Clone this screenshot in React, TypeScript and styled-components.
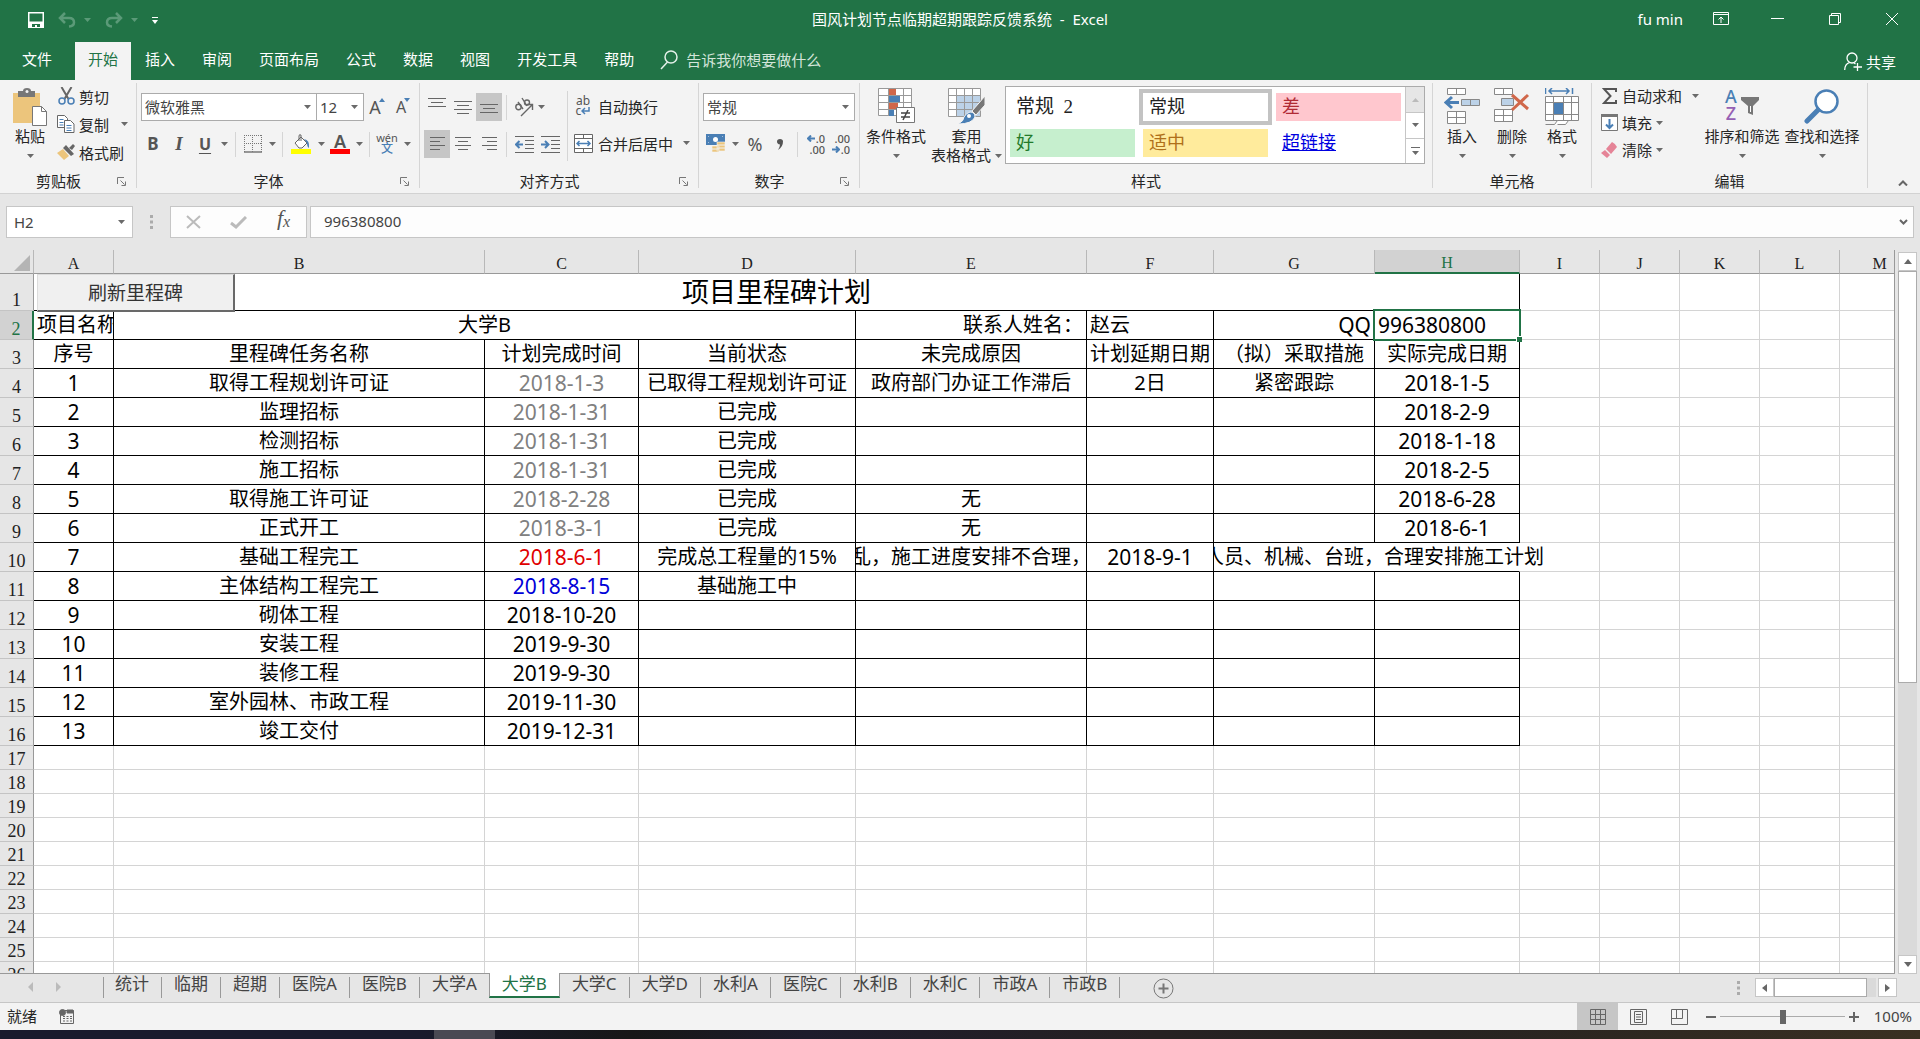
import React from "react";
import styled, { createGlobalStyle, css } from "styled-components";

const UI = `"Noto Sans", "Noto Sans CJK SC", sans-serif`;
const SONG = `"Liberation Serif", "Noto Sans CJK SC", serif`;
const GREEN = "#217346";
const INK = "#262626";
const GREY = "#6a6a6a";
const BLUE = "#4a7fb5";

const Global = createGlobalStyle`
  *, *::before, *::after { box-sizing: border-box; }
  body { margin: 0; font-family: ${UI}; font-size: 15px; color: ${INK}; }
  button, input, select { font: inherit; color: inherit; margin: 0; padding: 0; border: 0; background: none; border-radius: 0; }
  svg { display: block; flex: none; }
`;

const Window = styled.div`
  display: flex;
  flex-direction: column;
  height: 100vh;
  overflow: hidden;
  background: #e6e6e6;
`;

/* ---------- title bar ---------- */

const TitleBar = styled.header`
  display: grid;
  grid-template-columns: 1fr auto 1fr;
  align-items: center;
  height: 42px;
  padding-bottom: 5px;
  background: ${GREEN};
  color: #fff;
`;
const QuickAccess = styled.div`
  display: flex;
  align-items: center;
  gap: 8px;
  padding: 3px 0 0 28px;
`;
const QuickItem = styled.div`
  display: flex;
  align-items: center;
  gap: 8px;
  margin-left: 6px;
`;
const Title = styled.h1`
  margin: 0;
  font-size: 15px;
  font-weight: 400;
  line-height: 20px;
  white-space: pre;
`;
const WindowControls = styled.div`
  display: flex;
  align-items: center;
  justify-content: flex-end;
`;
const UserName = styled.span`
  margin-right: 9px;
`;
const CaptionButton = styled.button<{ $w?: number }>`
  display: flex;
  align-items: center;
  justify-content: center;
  width: ${(p) => p.$w ?? 57}px;
  height: 32px;
`;
const PlainButton = styled.button`
  display: flex;
  align-items: center;
`;

/* ---------- ribbon tabs ---------- */

const TabBar = styled.nav`
  display: flex;
  align-items: stretch;
  height: 38px;
  padding-right: 24px;
  background: ${GREEN};
  color: #fff;
`;
const RibbonTab = styled.button<{ $active?: boolean; $file?: boolean }>`
  padding: 0 13px 6px 13px;
  margin-right: 1px;
  margin-left: ${(p) => (p.$file ? 9 : 0)}px;
  white-space: nowrap;
  ${(p) => p.$file && css`margin-right: 10px;`}
  ${(p) => p.$active && css`background: #f3f3f3; color: ${GREEN};`}
`;
const TellMe = styled.label`
  display: flex;
  align-items: center;
  gap: 8px;
  margin-left: 12px;
  padding-bottom: 2px;
  flex: 1;
  input { flex: 1; outline: none; }
  input::placeholder { color: #d3e5da; opacity: 1; }
`;
const Share = styled.button`
  display: flex;
  align-items: center;
  gap: 4px;
`;

/* ---------- ribbon ---------- */

const Ribbon = styled.section`
  display: flex;
  height: 114px;
  padding: 3px 0 5px;
  background: #f3f3f3;
  border-bottom: 1px solid #d2d2d2;
`;
const Group = styled.div<{ $w: number }>`
  flex: none;
  display: flex;
  flex-direction: column;
  width: ${(p) => p.$w}px;
  border-right: 1px solid #d5d5d5;
`;
const GroupBody = styled.div<{ $pad: number }>`
  flex: 1;
  display: flex;
  padding-left: ${(p) => p.$pad}px;
`;
const GroupFoot = styled.div<{ $launch?: boolean }>`
  display: grid;
  grid-template-columns: ${(p) => (p.$launch ? "1fr 19px" : "1fr")};
  align-items: center;
  height: 17px;
  line-height: 17px;
  text-align: center;
  margin-bottom: -2px;
`;
const RibbonEnd = styled.div`
  flex: 1;
  display: flex;
  justify-content: flex-end;
  align-items: flex-end;
  padding: 0 12px 2px;
`;
const BigButton = styled.button<{ $w: number }>`
  display: flex;
  flex-direction: column;
  align-items: center;
  width: ${(p) => p.$w}px;
  padding-top: 5px;
  line-height: 19px;
  white-space: nowrap;
`;
const BigIcon = styled.span`
  display: flex;
  align-items: flex-start;
  justify-content: center;
  height: 39px;
`;
const BigLine = styled.span`
  display: flex;
  align-items: center;
  justify-content: center;
  gap: 4px;
  height: 19px;
`;
const Stack = styled.div<{ $row: number; $ml?: number; $w?: number }>`
  display: grid;
  grid-auto-rows: ${(p) => p.$row}px;
  align-content: start;
  margin-left: ${(p) => p.$ml ?? 0}px;
  width: ${(p) => (p.$w ? p.$w + "px" : "auto")};
`;
const LineButton = styled.button`
  display: flex;
  align-items: center;
  gap: 4px;
  padding-bottom: 2px;
  white-space: nowrap;
`;
const IconSlot = styled.span<{ $w: number }>`
  display: flex;
  justify-content: center;
  width: ${(p) => p.$w}px;
`;
const Rows = styled.div`
  display: flex;
  flex-direction: column;
  gap: 9px;
  padding-top: 10px;
`;
const ToolRow = styled.div`
  display: flex;
  align-items: center;
  height: 28px;
`;
const Tool = styled.button<{ $w: number; $on?: boolean }>`
  display: flex;
  align-items: center;
  justify-content: center;
  width: ${(p) => p.$w}px;
  height: 28px;
  color: #555;
  background: ${(p) => (p.$on ? "#c6c6c6" : "none")};
`;
const Glyph = styled.span<{ $size?: number; $bold?: boolean; $italic?: boolean; $under?: boolean }>`
  font-size: ${(p) => p.$size ?? 18}px;
  line-height: 20px;
  font-weight: ${(p) => (p.$bold ? 700 : 400)};
  font-style: ${(p) => (p.$italic ? "italic" : "normal")};
  font-family: ${(p) => (p.$italic ? `"Liberation Serif", serif` : "inherit")};
  text-decoration: ${(p) => (p.$under ? "underline" : "none")};
  text-underline-offset: 3px;
`;
const Rule = styled.span<{ $w?: number; $h?: number }>`
  flex: none;
  width: 1px;
  height: ${(p) => p.$h ?? 25}px;
  margin: 0 ${(p) => p.$w ?? 4}px;
  background: #d5d5d5;
`;
const TallRule = styled(Rule)`
  margin-top: 8px;
`;
const Combo = styled.span<{ $w: number }>`
  position: relative;
  display: flex;
  align-items: center;
  width: ${(p) => p.$w}px;
  height: 28px;
  border: 1px solid #ababab;
  background: #fff;
  color: #444;
  & + & { border-left: 0; }
  select {
    appearance: none;
    width: 100%;
    height: 100%;
    padding: 0 0 1px 3px;
    outline: none;
  }
  svg { position: absolute; right: 5px; pointer-events: none; }
`;

const Gallery = styled.div`
  display: flex;
  width: 420px;
  height: 78px;
  margin: 3px 0 0 2px;
  border: 1px solid #ababab;
  background: #fff;
`;
const Swatches = styled.div`
  flex: 1;
  display: grid;
  grid-template-columns: repeat(3, 125px);
  grid-auto-rows: 28px;
  gap: 8px;
  padding: 6px 4px;
`;
const Swatch = styled.button<{ $bg?: string; $fg?: string; $on?: boolean; $link?: boolean; $size?: number }>`
  padding-left: 6px;
  text-align: left;
  font-family: ${SONG};
  font-size: ${(p) => p.$size ?? 18}px;
  line-height: 26px;
  white-space: pre;
  background: ${(p) => p.$bg ?? "#fff"};
  color: ${(p) => p.$fg ?? "#222"};
  text-decoration: ${(p) => (p.$link ? "underline" : "none")};
  box-shadow: ${(p) => (p.$on ? "0 0 0 4px #c3c3c3" : "none")};
`;
const GalleryNav = styled.div`
  display: grid;
  grid-template-rows: 1fr 1fr 1fr;
  width: 19px;
  border-left: 1px solid #c6c6c6;
  button { display: flex; align-items: center; justify-content: center; }
  button + button { border-top: 1px solid #c6c6c6; }
  button:first-child { background: #e6e6e6; }
`;

/* ---------- formula bar ---------- */

const FormulaBar = styled.section`
  display: flex;
  align-items: center;
  height: 56px;
  padding: 0 6px 0 6px;
  color: #444;
`;
const NameBox = styled(Combo)`
  height: 32px;
  border-color: #c6c6c6;
  select { padding: 0 0 1px 7px; }
  svg { right: 7px; }
`;
const FxTools = styled.div`
  display: flex;
  width: 137px;
  height: 32px;
  border: 1px solid #c6c6c6;
  background: #fdfdfd;
  button { flex: 1; display: flex; align-items: center; justify-content: center; }
`;
const FormulaField = styled.label`
  flex: 1;
  display: flex;
  align-items: center;
  height: 32px;
  margin-left: 3px;
  padding: 0 5px 0 13px;
  border: 1px solid #c6c6c6;
  background: #fdfdfd;
  input { flex: 1; outline: none; padding-bottom: 2px; }
`;
const GripBox = styled.span<{ $w: number }>`
  display: flex;
  justify-content: center;
  align-self: center;
  width: ${(p) => p.$w}px;
`;

/* ---------- sheet ---------- */

const SheetArea = styled.main`
  flex: 1;
  min-height: 0;
  display: flex;
`;
const SheetPane = styled.div`
  position: relative;
  flex: 1;
  min-width: 0;
  overflow: hidden;
  background: #fff;
  border-right: 1px solid #999;
  border-bottom: 1px solid #999;
`;
const Sheet = styled.table`
  width: 100%;
  table-layout: fixed;
  border-collapse: separate;
  border-spacing: 0;
  font-size: 20px;
  line-height: 24px;
  color: #000;
`;
const ColHead = styled.th<{ $on?: boolean }>`
  height: 24px;
  padding: 3px 0 0;
  font-family: ${SONG};
  font-size: 16px;
  line-height: 17px;
  font-weight: 400;
  background: ${(p) => (p.$on ? "#d2d2d2" : "#e6e6e6")};
  color: ${(p) => (p.$on ? GREEN : "#222")};
  border-right: 1px solid #b8b8b8;
  border-bottom: ${(p) => (p.$on ? `2px solid ${GREEN}` : "1px solid #999")};
`;
const Corner = styled(ColHead)`
  padding: 0;
  svg { margin: 2px 3px 0 auto; }
`;
const RowHead = styled.th<{ $h: number; $on?: boolean }>`
  height: ${(p) => p.$h}px;
  padding: 0;
  vertical-align: bottom;
  font-family: ${SONG};
  font-size: 18px;
  line-height: 20px;
  font-weight: 400;
  background: ${(p) => (p.$on ? "#d2d2d2" : "#e6e6e6")};
  color: ${(p) => (p.$on ? GREEN : "#222")};
  border-bottom: 1px solid #c4c4c4;
  border-right: ${(p) => (p.$on ? `2px solid ${GREEN}` : "1px solid #999")};
`;
const Cell = styled.td<{ $table?: boolean; $align?: string; $fg?: string; $num?: boolean; $big?: boolean; $spill?: boolean }>`
  padding: 0 3px;
  overflow: ${(p) => (p.$spill ? "visible" : "hidden")};
  white-space: nowrap;
  text-align: ${(p) => p.$align ?? "center"};
  color: ${(p) => p.$fg ?? "#000"};
  font-size: ${(p) => (p.$big ? 27 : p.$num ? 21 : 20)}px;
  border-right: 1px solid ${(p) => (p.$spill ? "transparent" : p.$table ? "#000" : "#d4d4d4")};
  border-bottom: 1px solid ${(p) => (p.$table ? "#000" : "#d4d4d4")};
`;
const ActiveCell = styled(Cell)`
  position: relative;
  overflow: visible;
  &::after {
    content: "";
    position: absolute;
    inset: -2px;
    border: 2px solid ${GREEN};
  }
  &::before {
    content: "";
    position: absolute;
    right: -3px;
    bottom: -3px;
    z-index: 1;
    width: 6px;
    height: 6px;
    background: ${GREEN};
    border: solid #fff;
    border-width: 1px 0 0 1px;
  }
`;
const Overflowing = styled.div<{ $end?: boolean }>`
  display: flex;
  justify-content: ${(p) => (p.$end ? "flex-end" : "center")};
  overflow: hidden;
  margin: 0 ${(p) => (p.$end ? -28 : -3)}px 0 -3px;
`;
const MacroButton = styled.button`
  position: absolute;
  left: 37px;
  top: 24px;
  width: 198px;
  height: 38px;
  padding-bottom: 2px;
  font-family: ${SONG};
  font-size: 19px;
  color: #333;
  background: #f0f0f0;
  border: 1px solid #dcdcdc;
  border-right: 2px solid #696969;
  border-bottom: 2px solid #696969;
`;
const VScroll = styled.div`
  display: flex;
  flex-direction: column;
  width: 19px;
  margin: 2px 3px 0 3px;
  background: #dadada;
`;
const ScrollButton = styled.button`
  flex: none;
  display: flex;
  align-items: center;
  justify-content: center;
  width: 19px;
  height: 19px;
  background: #fff;
  border: 1px solid #c6c6c6;
`;
const VThumb = styled.div`
  flex: 0 1 57%;
  background: #fff;
  border: 1px solid #ababab;
`;
const Gap = styled.div`
  flex: 1;
`;

/* ---------- sheet tabs ---------- */

const SheetTabs = styled.nav`
  display: flex;
  align-items: flex-start;
  height: 29px;
  border-bottom: 1px solid #c6c6c6;
`;
const TabArrows = styled.div`
  display: flex;
  gap: 23px;
  width: 103px;
  padding: 8px 0 0 28px;
`;
const SheetTab = styled.button<{ $active?: boolean; $first?: boolean }>`
  position: relative;
  height: 25px;
  margin-top: -1px;
  padding: 0 13px 4px 12px;
  font-size: 17px;
  line-height: 20px;
  white-space: nowrap;
  color: ${(p) => (p.$active ? GREEN : "#444")};
  ${(p) =>
    p.$active
      ? css`
          margin-left: -1px;
          z-index: 1;
          background: #fff;
          border: 1px solid #999;
          border-top: 0;
          border-bottom: 2px solid ${GREEN};
          padding: 0 12px 2px;
        `
      : css`
          &::after {
            content: "";
            position: absolute;
            right: 0;
            top: 4px;
            bottom: 0;
            width: 1px;
            background: #999;
          }
        `}
  ${(p) => p.$first && css`&::before { content: ""; position: absolute; left: 0; top: 4px; bottom: 0; width: 1px; background: #999; }`}
`;
const AddSheet = styled.button`
  margin: 4px 0 0 33px;
`;
const HScroll = styled.div`
  display: flex;
  width: 142px;
  margin: 4px 23px 0 8px;
`;
const HTrack = styled.div`
  flex: 1;
  margin-right: 2px;
  padding-right: 9px;
  background: #dadada;
`;
const HThumb = styled.div`
  height: 19px;
  background: #fff;
  border: 1px solid #ababab;
`;

/* ---------- status bar ---------- */

const StatusBar = styled.footer`
  display: flex;
  align-items: center;
  height: 27px;
  padding: 0 8px 0 7px;
  background: #f3f3f3;
`;
const Ready = styled.span`
  margin-right: 22px;
  padding-bottom: 2px;
`;
const ViewButton = styled.button<{ $on?: boolean }>`
  display: flex;
  align-items: center;
  justify-content: center;
  width: 41px;
  height: 27px;
  background: ${(p) => (p.$on ? "#c6c6c6" : "none")};
`;
const ZoomOut = styled(PlainButton)`
  margin-left: 6px;
`;
const ZoomRange = styled.input`
  appearance: none;
  width: 125px;
  height: 14px;
  margin: 0 4px;
  background: linear-gradient(#ababab, #ababab) center / 100% 1px no-repeat;
  &::-webkit-slider-thumb {
    appearance: none;
    width: 6px;
    height: 14px;
    background: #666;
  }
`;
const ZoomValue = styled.span`
  margin-left: 12px;
  padding-bottom: 2px;
  width: 41px;
  text-align: right;
  color: #444;
`;
const TaskBar = styled.div`
  display: flex;
  height: 9px;
  overflow: hidden;
  background: linear-gradient(90deg, #191a2c 0%, #191a2c 22%, #171717 33%, #1d1b2b 42%, #262122 60%, #262220 75%, #3a3022 100%);
  padding-left: 434px;
`;
const TaskItem = styled.span`
  width: 61px;
  background: #4a4953;
`;

/* ---------- icons ---------- */

const Arrow = ({ c = GREY }: { c?: string }) => (
  <svg width="7" height="4" viewBox="0 0 7 4"><path d="M0 0h7L3.500 4z" fill={c} /></svg>
);
const Lines = ({ a, y = 0 }: { a: number[][]; y?: number }) => (
  <svg width="18" height="18" viewBox="0 0 18 18" stroke="#666" fill="none">
    {a.map(([x1, x2], i) => <path key={i} d={`M${x1} ${y + i * 4 + 0.5}H${x2}`} />)}
  </svg>
);
const Launcher = () => (
  <svg width="9" height="9" viewBox="0 0 9 9" fill="none" stroke="#777"><path d="M.5 7V.5H7M3.500 3.500l4 4M8.500 4.500v4h-4" /></svg>
);
const Grip = () => (
  <svg width="3" height="14" viewBox="0 0 3 14" fill="#ababab"><path d="M0 0h3v3H0zM0 5.500h3v3H0zM0 11h3v3H0z" /></svg>
);
const SaveIcon = () => (
  <svg width="16" height="16" viewBox="0 0 16 16"><path fill="#fff" fillRule="evenodd" d="M0 0h16v16H0zM1.500 1.500v8h13v-8zM4 12v3h3v-2h2v2h3v-3z" /></svg>
);
const UndoIcon = ({ flip }: { flip?: boolean }) => (
  <svg width="18" height="16" viewBox="0 0 18 16" fill="none" stroke="#5b9a78" strokeWidth="2.500">
    <g transform={flip ? "matrix(-1 0 0 1 18 0)" : undefined}><path d="M2 6h9q5 0 5 4.500Q16 14 11 14.500M7 1L2 6l5 5" /></g>
  </svg>
);
const PasteIcon = () => (
  <svg width="36" height="38" viewBox="0 0 36 38">
    <path fill="#ecc57c" d="M1 5h27v30H1z" /><path fill="#777" d="M6 3h5q0-3 4-3t4 3h4v6H6z" /><circle cx="15" cy="3.500" r="1.500" fill="#f3f3f3" />
    <path fill="#fff" stroke="#777" d="M20.500 18.500h9l5 5v14h-14z" /><path d="M29.500 18.500v5h5" fill="none" stroke="#777" />
  </svg>
);
const CutIcon = () => (
  <svg width="17" height="18" viewBox="0 0 17 18" fill="none"><path d="M3.500 0l7 12M13.500 0l-7 12" stroke="#666" strokeWidth="2" /><circle cx="4" cy="14" r="3" stroke={BLUE} strokeWidth="1.500" /><circle cx="13" cy="14" r="3" stroke={BLUE} strokeWidth="1.500" /></svg>
);
const CopyIcon = () => (
  <svg width="18" height="18" viewBox="0 0 18 18" fill="#fff" stroke="#666"><path d="M.5.500h7l3 3v9h-10z" /><path d="M2.500 4.500h4m-4 3h4m-4 2.500h4" stroke={BLUE} /><path d="M7.500 5.500h6l3.500 3.500v8.500H7.500z" /><path d="M9.500 10.500h5m-5 2.500h5m-5 2.500h5" stroke={BLUE} /></svg>
);
const BrushIcon = () => (
  <svg width="18" height="16" viewBox="0 0 18 16"><path fill="#ecc57c" d="M0 9l6-4 6 7-5 4z" /><path fill="#666" d="M6 4l3-3 8 9-3 2zM12 4l4-4 2 2-3 4z" /></svg>
);
const BordersIcon = () => (
  <svg width="18" height="18" viewBox="0 0 18 18" fill="none" stroke="#777"><path strokeDasharray="1 1" d="M0 .5h18M0 8.500h18M.5 0v17M8.500 0v17M17.500 0v17" /><path d="M0 17h18" strokeWidth="1.500" /></svg>
);
const FillIcon = () => (
  <svg width="20" height="20" viewBox="0 0 20 20"><path d="M4 9l6-6 6 6-5 5H8z" fill="#fff" stroke="#666" /><path d="M8 7V2q0-2 2-1v6" fill="none" stroke="#666" /><path d="M13 5q6 1 5 9-2-1-2-5z" fill={BLUE} /><path fill="#ff0" d="M0 15h20v5H0z" /></svg>
);
const FontColor = styled.span`
  width: 20px;
  height: 20px;
  border-bottom: 5px solid #f00;
  font-size: 18px;
  font-weight: 600;
  line-height: 14px;
`;
const Pinyin = styled.span`
  display: flex;
  flex-direction: column;
  align-items: center;
  font-size: 11px;
  line-height: 10px;
  b { font-weight: 500; font-size: 12px; line-height: 12px; color: ${BLUE}; }
`;
const SizeA = styled.span<{ $s: number }>`
  display: flex;
  align-items: flex-start;
  font-size: ${(p) => p.$s}px;
  line-height: 18px;
  svg { margin-left: -2px; }
`;
const OrientIcon = () => (
  <svg width="20" height="20" viewBox="0 0 20 20" fill="none" stroke="#666" strokeWidth="1.400"><path d="M7 19L18 8m-5-.500h5.500v5.500" /><circle cx="4.500" cy="10" r="2.700" /><path d="M4 5l5 7M8 1l5 8" /><circle cx="13" cy="5.500" r="2.500" /></svg>
);
const IndentIcon = ({ right }: { right?: boolean }) => (
  <svg width="19" height="17" viewBox="0 0 19 17" fill="none" stroke="#666"><path d="M0 .5h19M10 4.500h9M10 8.500h9M10 12.500h9M0 16.500h19" /><path stroke={BLUE} strokeWidth="2" d={right ? "M0 8.500h7M4 5l3.500 3.500L4 12" : "M8 8.500H1M4.500 5L1 8.500 4.500 12"} /></svg>
);
const WrapGlyph = styled.span`
  display: grid;
  grid-template-columns: auto auto;
  align-items: center;
  font-size: 12px;
  line-height: 10px;
  color: #555;
  i { grid-column: 1 / 3; font-style: normal; }
`;
const ReturnIcon = () => (
  <svg width="9" height="8" viewBox="0 0 9 8" fill="none" stroke={BLUE} strokeWidth="1.500"><path d="M8 0v4H1M4 1L1 4l3 3" /></svg>
);
const MergeIcon = () => (
  <svg width="19" height="19" viewBox="0 0 19 19" fill="#fff" stroke="#666"><path d="M.5.500h18v18H.5zM.5 4.500h18M.5 14.500h18M9.500.500v4M9.500 14.500v4" /><path d="M3 9.500h13M5.500 7L3 9.500 5.500 12M13.500 7L16 9.500 13.500 12" fill="none" stroke={BLUE} strokeWidth="1.500" /></svg>
);
const CurrencyIcon = () => (
  <svg width="20" height="20" viewBox="0 0 20 20"><path fill={BLUE} d="M0 0h19v11H0z" /><path d="M2 2h15v7H2z" fill="#fff" /><path d="M3 2h13l1 1v5l-1 1H3L2 8V3z" fill={BLUE} /><circle cx="9.500" cy="5.500" r="2.500" fill="#fff" /><path fill="#ecc57c" stroke="#f3f3f3" strokeWidth=".6" d="M11 8h8v3h-8zM11 11h8v3h-8zM11 14h8v3h-8zM6 12h7v3H6zM6 15h7v3H6z" /></svg>
);
const Decimals = styled.span`
  display: flex;
  flex-direction: column;
  font-size: 11px;
  line-height: 11px;
  font-weight: 500;
  span { display: flex; align-items: center; justify-content: flex-end; gap: 1px; }
`;
const MiniArrow = ({ right }: { right?: boolean }) => (
  <svg width="8" height="7" viewBox="0 0 8 7" fill="none" stroke={BLUE} strokeWidth="2"><path d={right ? "M0 3.500h6M4 .5l3 3-3 3" : "M8 3.500H2M4 .5l-3 3 3 3"} /></svg>
);
const CondIcon = () => (
  <svg width="37" height="36" viewBox="0 0 37 36"><path fill="#fff" stroke="#999" d="M.5.500h33v27H.5zM.5 7.500h33M.5 14.500h33M.5 21.500h33M10.500.500v27M25.500.500v27" /><path fill="#d0674a" d="M11 1h7v6h-7zM11 15h9v6h-9z" /><path fill={BLUE} d="M11 8h11v6H11zM11 22h5v6h-5z" /><path fill="#fff" stroke="#777" d="M18.500 19.500h18v15h-18z" /><path d="M23 25h9m-9 4h9m-2-7l-5 10" stroke="#444" fill="none" strokeWidth="1.500" /></svg>
);
const TableFmtIcon = () => (
  <svg width="38" height="37" viewBox="0 0 38 37"><path fill="#fff" d="M0 0h33v28H0z" /><path fill="#bcd2e8" d="M8 7h25v21H8z" /><path fill="none" stroke="#999" d="M.5.500h32v28H.5zM.5 7.500h32M.5 14.500h32M.5 21.500h32M8.500.500v28M16.500.500v28M24.500.500v28" /><path fill="#777" d="M37 8v9L28 27l-4-4z" stroke="#f3f3f3" /><path fill={BLUE} stroke="#f3f3f3" d="M22 24q5 0 5 5-3 7-17 7 6-3 6-7 2-4 6-5z" /><circle cx="21" cy="28" r="2" fill="#fff" /></svg>
);
const InsertIcon = () => (
  <svg width="36" height="36" viewBox="0 0 36 36" fill="#fff" stroke="#888"><path d="M3.500.500h18v6h-18zM12.500.500v6M3.500 23.500h18v12h-18zM3.500 29.500h18M12.500 23.500v12" /><path fill="#bcd2e8" d="M17.500 11.500h18v6h-18zM26.500 11.500v6" /><path d="M15 14.500H2M8 9l-6 5.500L8 20" fill="none" stroke={BLUE} strokeWidth="3" /></svg>
);
const DeleteIcon = () => (
  <svg width="36" height="36" viewBox="0 0 36 36" fill="#fff" stroke="#888"><path d="M.5.500h18v6H.5zM9.500.500v6M.5 21.500h18v12H.5zM.5 27.500h18M9.500 21.500v12" /><path fill="#bcd2e8" d="M7.500 10.500h12v7h-12z" /><path d="M18 7l16 14M34 7L18 22" fill="none" stroke="#d0674a" strokeWidth="3" /></svg>
);
const FormatIcon = () => (
  <svg width="34" height="37" viewBox="0 0 34 37" fill="#fff" stroke="#888"><path d="M.5 8.500h33v24H.5zM.5 14.500h33M.5 26.500h33M8.500 8.500v24M18.500 8.500v24M26.500 8.500v24" /><path fill={BLUE} stroke="none" d="M9 15h9v11H9z" /><path d="M.5 36.500h9l3-4h11l-3 4h-8" /><path d="M.5 0v6M27.500 0v6M4 3h20M7 0L4 3l3 3M21 0l3 3-3 3" fill="none" stroke={BLUE} strokeWidth="1.500" /></svg>
);
const SumIcon = () => (
  <svg width="15" height="16" viewBox="0 0 15 16" fill="none" stroke="#555" strokeWidth="2"><path d="M14 4V1H2l6.500 7L2 15h12v-3" /></svg>
);
const FillDownIcon = () => (
  <svg width="17" height="17" viewBox="0 0 17 17"><path fill="#fff" stroke="#777" d="M.5.500h16v16H.5z" /><path fill="#777" d="M0 0h17v3H0z" /><path d="M8.500 5v9M5 10.500L8.500 14l3.500-3.500" fill="none" stroke={BLUE} strokeWidth="2" /></svg>
);
const EraserIcon = () => (
  <svg width="16" height="16" viewBox="0 0 16 16"><path fill="#e58497" d="M5 7l6-7q4 2 5 5l-6 7z" /><path fill="#e58497" d="M4 8l5 5-3 3-6-5z" /></svg>
);
const SortIcon = styled.span`
  display: flex;
  align-items: flex-start;
  gap: 4px;
  font-size: 18px;
  line-height: 17px;
  font-weight: 500;
  span { display: flex; flex-direction: column; color: ${BLUE}; }
  b { font-weight: 500; color: #9560b3; }
  svg { margin-top: 9px; }
`;
const FunnelIcon = () => (
  <svg width="18" height="18" viewBox="0 0 18 18"><path fill="#777" d="M0 0h18v3l-6 6v9l-5-2V9L0 3z" /><path d="M9.500 9v6" stroke="#fff" /></svg>
);
const FindIcon = () => (
  <svg width="36" height="36" viewBox="0 0 36 36"><circle cx="22.500" cy="13.500" r="11" fill="#fff" stroke={BLUE} strokeWidth="2.500" /><path d="M14 22L3 33" stroke={BLUE} strokeWidth="5" strokeLinecap="round" /></svg>
);
const Fx = styled.span`
  font: italic 400 22px/22px "Liberation Serif", serif;
  color: #555;
  padding-bottom: 4px;
  sub { font-size: 16px; vertical-align: -2px; }
`;

/* ---------- data ---------- */

const COLS = [34, 80, 371, 154, 217, 231, 127, 161, 145, 80, 80, 80, 80, 80];
const LETTERS = ["A", "B", "C", "D", "E", "F", "G", "H", "I", "J", "K", "L", "M"];
const HEADINGS = ["序号", "里程碑任务名称", "计划完成时间", "当前状态", "未完成原因", "计划延期日期", "（拟）采取措施", "实际完成日期"];
const TASKS: string[][] = [
  ["1", "取得工程规划许可证", "2018-1-3", "已取得工程规划许可证", "政府部门办证工作滞后", "2日", "紧密跟踪", "2018-1-5"],
  ["2", "监理招标", "2018-1-31", "已完成", "", "", "", "2018-2-9"],
  ["3", "检测招标", "2018-1-31", "已完成", "", "", "", "2018-1-18"],
  ["4", "施工招标", "2018-1-31", "已完成", "", "", "", "2018-2-5"],
  ["5", "取得施工许可证", "2018-2-28", "已完成", "无", "", "", "2018-6-28"],
  ["6", "正式开工", "2018-3-1", "已完成", "无", "", "", "2018-6-1"],
  ["7", "基础工程完工", "2018-6-1", "完成总工程量的15%", "乱，施工进度安排不合理，", "2018-9-1", "人员、机械、台班，合理安排施工计划"],
  ["8", "主体结构工程完工", "2018-8-15", "基础施工中", "", "", "", ""],
  ["9", "砌体工程", "2018-10-20", "", "", "", "", ""],
  ["10", "安装工程", "2019-9-30", "", "", "", "", ""],
  ["11", "装修工程", "2019-9-30", "", "", "", "", ""],
  ["12", "室外园林、市政工程", "2019-11-30", "", "", "", "", ""],
  ["13", "竣工交付", "2019-12-31", "", "", "", "", ""],
];
const dateColor = (row: number) => (row < 6 ? "#808080" : row === 6 ? "#e00000" : row === 7 ? "#0000d8" : "#000");
const SHEETS = ["统计", "临期", "超期", "医院A", "医院B", "大学A", "大学B", "大学C", "大学D", "水利A", "医院C", "水利B", "水利C", "市政A", "市政B"];

const Blank = ({ n, table }: { n: number; table?: boolean }) => (
  <>{Array.from({ length: n }, (_, i) => <Cell key={i} $table={table} />)}</>
);

const Foot = ({ label, launch }: { label: string; launch?: boolean }) => (
  <GroupFoot $launch={launch}><span>{label}</span>{launch && <PlainButton aria-label={label + "设置"}><Launcher /></PlainButton>}</GroupFoot>
);
const Drop = ({ w, label }: { w: number; label: string }) => (
  <Tool $w={w} aria-label={label}><Arrow /></Tool>
);
const Big = ({ w, icon, label }: { w: number; icon: React.ReactNode; label: string }) => (
  <BigButton $w={w}><BigIcon>{icon}</BigIcon><BigLine>{label}</BigLine><BigLine><Arrow /></BigLine></BigButton>
);

function RibbonPanel() {
  return (
    <Ribbon>
      <Group $w={137}>
        <GroupBody $pad={7}>
          <Big w={46} icon={<PasteIcon />} label="粘贴" />
          <Stack $row={28} $ml={4}>
            <LineButton><IconSlot $w={18}><CutIcon /></IconSlot>剪切</LineButton>
            <LineButton><IconSlot $w={18}><CopyIcon /></IconSlot>复制<IconSlot $w={22}><Arrow /></IconSlot></LineButton>
            <LineButton><IconSlot $w={18}><BrushIcon /></IconSlot>格式刷</LineButton>
          </Stack>
        </GroupBody>
        <Foot label="剪贴板" launch />
      </Group>

      <Group $w={283}>
        <GroupBody $pad={4}>
          <Rows>
            <ToolRow>
              <Combo $w={176}><select aria-label="字体"><option>微软雅黑</option></select><Arrow /></Combo>
              <Combo $w={47}><select aria-label="字号"><option>12</option></select><Arrow /></Combo>
              <Tool $w={26} aria-label="增大字号"><SizeA $s={18}>A<svg width="6" height="4" viewBox="0 0 6 4"><path d="M0 4l3-4 3 4z" fill={BLUE} /></svg></SizeA></Tool>
              <Tool $w={26} aria-label="减小字号"><SizeA $s={16}>A<svg width="6" height="4" viewBox="0 0 6 4"><path d="M0 0l3 4 3-4z" fill={BLUE} /></svg></SizeA></Tool>
            </ToolRow>
            <ToolRow>
              <Tool $w={24}><Glyph $size={17} $bold>B</Glyph></Tool>
              <Tool $w={28}><Glyph $size={19} $bold $italic>I</Glyph></Tool>
              <Tool $w={24}><Glyph $size={16} $bold $under>U</Glyph></Tool>
              <Drop w={14} label="下划线样式" />
              <Rule />
              <Tool $w={26} aria-label="边框"><BordersIcon /></Tool>
              <Drop w={12} label="更多边框" />
              <Rule />
              <Tool $w={28} aria-label="填充颜色"><FillIcon /></Tool>
              <Drop w={12} label="更多填充颜色" />
              <Tool $w={26}><FontColor>A</FontColor></Tool>
              <Drop w={12} label="更多字体颜色" />
              <Rule />
              <Tool $w={26}><Pinyin>wén<b>文</b></Pinyin></Tool>
              <Drop w={14} label="拼音设置" />
            </ToolRow>
          </Rows>
        </GroupBody>
        <Foot label="字体" launch />
      </Group>

      <Group $w={279}>
        <GroupBody $pad={4}>
          <Rows>
            <ToolRow>
              <Tool $w={26} aria-label="顶端对齐"><Lines y={0} a={[[0, 18], [3, 15], [0, 18]]} /></Tool>
              <Tool $w={26} aria-label="垂直居中"><Lines y={3} a={[[0, 18], [3, 15], [0, 18], [3, 15]]} /></Tool>
              <Tool $w={26} $on aria-label="底端对齐"><Lines y={6} a={[[0, 18], [3, 15], [0, 18]]} /></Tool>
              <Rule />
              <Tool $w={26} aria-label="方向"><OrientIcon /></Tool>
              <Drop w={8} label="更多方向" />
            </ToolRow>
            <ToolRow>
              <Tool $w={26} $on aria-label="左对齐"><Lines y={2} a={[[2, 17], [2, 12], [2, 17], [2, 12]]} /></Tool>
              <Tool $w={26} aria-label="居中"><Lines y={2} a={[[1, 17], [4, 14], [1, 17], [4, 14]]} /></Tool>
              <Tool $w={26} aria-label="右对齐"><Lines y={2} a={[[2, 17], [7, 17], [2, 17], [7, 17]]} /></Tool>
              <Rule />
              <Tool $w={26} aria-label="减少缩进量"><IndentIcon /></Tool>
              <Tool $w={26} aria-label="增加缩进量"><IndentIcon right /></Tool>
            </ToolRow>
          </Rows>
          <TallRule $h={70} />
          <Rows>
            <ToolRow>
              <LineButton><IconSlot $w={22}><WrapGlyph><i>ab</i>c<ReturnIcon /></WrapGlyph></IconSlot>自动换行</LineButton>
            </ToolRow>
            <ToolRow>
              <LineButton><IconSlot $w={22}><MergeIcon /></IconSlot>合并后居中<IconSlot $w={18}><Arrow /></IconSlot></LineButton>
            </ToolRow>
          </Rows>
        </GroupBody>
        <Foot label="对齐方式" launch />
      </Group>

      <Group $w={161}>
        <GroupBody $pad={4}>
          <Rows>
            <ToolRow>
              <Combo $w={152}><select aria-label="数字格式"><option>常规</option></select><Arrow /></Combo>
            </ToolRow>
            <ToolRow>
              <Tool $w={26} aria-label="会计数字格式"><CurrencyIcon /></Tool>
              <Drop w={12} label="更多会计格式" />
              <Tool $w={28}><Glyph $size={18}>%</Glyph></Tool>
              <Tool $w={22} aria-label="千位分隔样式"><svg width="6" height="11" viewBox="0 0 6 11"><path d="M0 2.500a3 2.500 0 0 1 6 0Q6 8 1 11q2-3 2-5.500Q0 5 0 2.500z" fill="#555" /></svg></Tool>
              <Rule $w={6} />
              <Tool $w={24}><Decimals><span><MiniArrow />.0</span><span>.00</span></Decimals></Tool>
              <Tool $w={26}><Decimals><span>.00</span><span><MiniArrow right />.0</span></Decimals></Tool>
            </ToolRow>
          </Rows>
        </GroupBody>
        <Foot label="数字" launch />
      </Group>

      <Group $w={573}>
        <GroupBody $pad={2}>
          <Big w={68} icon={<CondIcon />} label="条件格式" />
          <BigButton $w={73}>
            <BigIcon><TableFmtIcon /></BigIcon>
            <BigLine>套用</BigLine>
            <BigLine>表格格式<Arrow /></BigLine>
          </BigButton>
          <Gallery>
            <Swatches>
              <Swatch $size={19}>常规  2</Swatch>
              <Swatch $on>常规</Swatch>
              <Swatch $bg="#ffc7ce" $fg="#b02a35">差</Swatch>
              <Swatch $bg="#c6efce" $fg="#237a2b">好</Swatch>
              <Swatch $bg="#ffeb9c" $fg="#b0701a">适中</Swatch>
              <Swatch $fg="#0000e0" $link>超链接</Swatch>
            </Swatches>
            <GalleryNav>
              <button aria-label="上一行"><svg width="7" height="4" viewBox="0 0 7 4"><path d="M0 4l3.500-4L7 4z" fill="#bbb" /></svg></button>
              <button aria-label="下一行"><Arrow /></button>
              <button aria-label="其他样式"><svg width="9" height="8" viewBox="0 0 9 8" fill={GREY}><path d="M0 0h9v1H0zM1 4h7L4.500 8z" /></svg></button>
            </GalleryNav>
          </Gallery>
        </GroupBody>
        <Foot label="样式" />
      </Group>

      <Group $w={159}>
        <GroupBody $pad={4}>
          <Big w={50} icon={<InsertIcon />} label="插入" />
          <Big w={50} icon={<DeleteIcon />} label="删除" />
          <Big w={50} icon={<FormatIcon />} label="格式" />
        </GroupBody>
        <Foot label="单元格" />
      </Group>

      <Group $w={276}>
        <GroupBody $pad={8}>
          <Stack $row={27} $w={102}>
            <LineButton><IconSlot $w={18}><SumIcon /></IconSlot>自动求和<IconSlot $w={18}><Arrow /></IconSlot></LineButton>
            <LineButton><IconSlot $w={18}><FillDownIcon /></IconSlot>填充<Arrow /></LineButton>
            <LineButton><IconSlot $w={18}><EraserIcon /></IconSlot>清除<Arrow /></LineButton>
          </Stack>
          <Big w={80} icon={<SortIcon><span>A<b>Z</b></span><FunnelIcon /></SortIcon>} label="排序和筛选" />
          <Big w={80} icon={<FindIcon />} label="查找和选择" />
        </GroupBody>
        <Foot label="编辑" />
      </Group>
      <RibbonEnd>
        <PlainButton aria-label="折叠功能区"><svg width="10" height="6" viewBox="0 0 10 6" fill="none" stroke="#666" strokeWidth="2"><path d="M1 5.500L5 1.500l4 4" /></svg></PlainButton>
      </RibbonEnd>
    </Ribbon>
  );
}

function SheetTable() {
  return (
    <Sheet>
      <colgroup>{COLS.map((w, i) => <col key={i} width={w} />)}</colgroup>
      <thead>
        <tr>
          <Corner><svg width="16" height="16" viewBox="0 0 16 16"><path d="M16 0v16H0z" fill="#b4b4b4" /></svg></Corner>
          {LETTERS.map((l) => <ColHead key={l} scope="col" $on={l === "H"}>{l}</ColHead>)}
        </tr>
      </thead>
      <tbody>
        <tr><RowHead scope="row" $h={37}>1</RowHead><Cell colSpan={8} $table $big>项目里程碑计划</Cell><Blank n={5} /></tr>
        <tr>
          <RowHead scope="row" $h={29} $on>2</RowHead>
          <Cell $table $align="left">项目名称</Cell>
          <Cell $table colSpan={3}>大学B</Cell>
          <Cell $table $align="right">联系人姓名：</Cell>
          <Cell $table $align="left">赵云</Cell>
          <Cell $table $num $align="right">QQ</Cell>
          <ActiveCell $table $num $align="left">996380800</ActiveCell>
          <Blank n={5} />
        </tr>
        <tr><RowHead scope="row" $h={29}>3</RowHead>{HEADINGS.map((h) => <Cell key={h} $table>{h}</Cell>)}<Blank n={5} /></tr>
        {TASKS.map((t, r) => (
          <tr key={r}>
            <RowHead scope="row" $h={29}>{r + 4}</RowHead>
            {t.map((v, c) => {
              const spill = r === 6 && c === 6;
              const clipped = r === 6 && c === 4;
              return (
                <Cell key={c} $table $num={/^[\d-]+$/.test(v)} $fg={c === 2 ? dateColor(r) : undefined} $spill={spill} colSpan={spill ? 2 : 1}>
                  {spill || clipped ? <Overflowing $end={spill}>{v}</Overflowing> : v}
                </Cell>
              );
            })}
            <Blank n={5} />
          </tr>
        ))}
        {Array.from({ length: 10 }, (_, i) => (
          <tr key={i}><RowHead scope="row" $h={24}>{i + 17}</RowHead><Blank n={13} /></tr>
        ))}
      </tbody>
    </Sheet>
  );
}

const Tri = ({ d, c = "#666", w = 8, h = 5 }: { d: string; c?: string; w?: number; h?: number }) => (
  <svg width={w} height={h} viewBox={`0 0 ${w} ${h}`}><path d={d} fill={c} /></svg>
);

export default function App() {
  return (
    <Window>
      <Global />
      <TitleBar>
        <QuickAccess>
          <PlainButton aria-label="保存"><SaveIcon /></PlainButton>
          <QuickItem><PlainButton aria-label="撤消"><UndoIcon /></PlainButton><Arrow c="#5b9a78" /></QuickItem>
          <QuickItem><PlainButton aria-label="恢复"><UndoIcon flip /></PlainButton><Arrow c="#5b9a78" /></QuickItem>
          <QuickItem><PlainButton aria-label="自定义快速访问工具栏"><svg width="6" height="7" viewBox="0 0 6 7" fill="#fff"><path d="M0 0h6v1H0zM0 3h6L3 7z" /></svg></PlainButton></QuickItem>
        </QuickAccess>
        <Title>国风计划节点临期超期跟踪反馈系统  -  Excel</Title>
        <WindowControls>
          <UserName>fu min</UserName>
          <CaptionButton aria-label="功能区显示选项"><svg width="16" height="13" viewBox="0 0 16 13" fill="none" stroke="#fff"><path d="M.5.500h15v12H.5zM.5 2.500h15M8 11V5M5.500 7.500L8 5l2.500 2.500" /></svg></CaptionButton>
          <CaptionButton aria-label="最小化"><svg width="13" height="1" viewBox="0 0 13 1"><path d="M0 0h13v1H0z" fill="#fff" /></svg></CaptionButton>
          <CaptionButton aria-label="还原"><svg width="12" height="12" viewBox="0 0 12 12" fill="none" stroke="#fff"><path d="M.5 2.500h9v9h-9zM2.500 2.500v-2h9v9h-2" /></svg></CaptionButton>
          <CaptionButton aria-label="关闭"><svg width="12" height="12" viewBox="0 0 12 12" fill="none" stroke="#fff"><path d="M0 0l12 12M12 0L0 12" /></svg></CaptionButton>
        </WindowControls>
      </TitleBar>

      <TabBar>
        <RibbonTab $file>文件</RibbonTab>
        {["开始", "插入", "审阅", "页面布局", "公式", "数据", "视图", "开发工具", "帮助"].map((t, i) => <RibbonTab key={t} $active={i === 0}>{t}</RibbonTab>)}
        <TellMe>
          <svg width="18" height="20" viewBox="0 0 18 20" fill="none" stroke="#e4f0e9" strokeWidth="1.500"><circle cx="11" cy="7" r="6" /><path d="M7.500 12L1 19" /></svg>
          <input aria-label="告诉我你想要做什么" placeholder="告诉我你想要做什么" />
        </TellMe>
        <Share>
          <svg width="18" height="19" viewBox="0 0 18 19" fill="none" stroke="#fff" strokeWidth="1.300"><circle cx="8" cy="6" r="5" /><path d="M.7 18q0-6 5-7.500M10 11l1.500 1M13.500 11v8M9.500 15h8.500" /></svg>
          共享
        </Share>
      </TabBar>

      <RibbonPanel />

      <FormulaBar>
        <NameBox $w={127}><select aria-label="名称框"><option>H2</option></select><Arrow /></NameBox>
        <GripBox $w={37}><Grip /></GripBox>
        <FxTools>
          <button aria-label="取消"><svg width="15" height="14" viewBox="0 0 15 14" fill="none" stroke="#bbb" strokeWidth="2"><path d="M1 1l13 12M14 1L1 13" /></svg></button>
          <button aria-label="输入"><svg width="17" height="13" viewBox="0 0 17 13" fill="none" stroke="#bbb" strokeWidth="3"><path d="M1 7l5 4L16 1" /></svg></button>
          <button><Fx>f<sub>x</sub></Fx></button>
        </FxTools>
        <FormulaField>
          <input aria-label="编辑栏" defaultValue="996380800" />
          <svg width="9" height="6" viewBox="0 0 9 6" fill="none" stroke="#666" strokeWidth="2"><path d="M1 1l3.500 3.500L8 1" /></svg>
        </FormulaField>
      </FormulaBar>

      <SheetArea>
        <SheetPane>
          <SheetTable />
          <MacroButton>刷新里程碑</MacroButton>
        </SheetPane>
        <VScroll>
          <ScrollButton aria-label="向上滚动"><Tri d="M0 5l4-5 4 5z" /></ScrollButton>
          <VThumb />
          <Gap />
          <ScrollButton aria-label="向下滚动"><Tri d="M0 0h8L4 5z" /></ScrollButton>
        </VScroll>
      </SheetArea>

      <SheetTabs>
        <TabArrows>
          <Tri w={5} h={10} d="M5 0v10L0 5z" c="#bbb" />
          <Tri w={5} h={10} d="M0 0v10l5-5z" c="#bbb" />
        </TabArrows>
        {SHEETS.map((s, i) => <SheetTab key={s} $first={i === 0} $active={s === "大学B"}>{s}</SheetTab>)}
        <AddSheet aria-label="新工作表"><svg width="21" height="21" viewBox="0 0 21 21" fill="none" stroke="#777"><circle cx="10.500" cy="10.500" r="9.500" /><path strokeWidth="2" d="M10.500 5.500v10M5.500 10.500h10" /></svg></AddSheet>
        <Gap />
        <GripBox $w={17}><Grip /></GripBox>
        <HScroll>
          <ScrollButton aria-label="向左滚动"><Tri w={5} h={8} d="M5 0v8L0 4z" /></ScrollButton>
          <HTrack><HThumb /></HTrack>
          <ScrollButton aria-label="向右滚动"><Tri w={5} h={8} d="M0 0v8l5-4z" /></ScrollButton>
        </HScroll>
      </SheetTabs>

      <StatusBar>
        <Ready>就绪</Ready>
        <PlainButton aria-label="录制宏"><svg width="15" height="15" viewBox="0 0 15 15" fill="none" stroke="#666"><path d="M1.500 5v9.500h13v-13H6" /><path d="M4 7.500h9M4 9.500h9M4 12h9" strokeDasharray="2 1.500" /><circle cx="3.500" cy="3.500" r="3" fill="#666" /><path d="M8 1h6v3H8z" fill="#666" /></svg></PlainButton>
        <Gap />
        <ViewButton $on aria-label="普通"><svg width="16" height="16" viewBox="0 0 16 16" fill="none" stroke="#666"><path d="M.5.500h15v15H.5zM.5 5.500h15M.5 10.500h15M5.500.500v15M10.500.500v15" /></svg></ViewButton>
        <ViewButton aria-label="页面布局视图"><svg width="17" height="16" viewBox="0 0 17 16" fill="none" stroke="#666"><path d="M.5.500h16v15H.5zM4.500 2.500h8v11h-8zM6 5.500h5M6 8h5M6 10.500h5" /></svg></ViewButton>
        <ViewButton aria-label="分页预览"><svg width="17" height="16" viewBox="0 0 17 16" fill="none" stroke="#666"><path d="M.5.500h16v15H.5zM5.500.500v9M.5 9.500h11v-9" /></svg></ViewButton>
        <ZoomOut aria-label="缩小"><svg width="10" height="10" viewBox="0 0 10 10"><path d="M0 4h10v2H0z" fill="#666" /></svg></ZoomOut>
        <ZoomRange type="range" aria-label="缩放" defaultValue={50} />
        <PlainButton aria-label="放大"><svg width="10" height="10" viewBox="0 0 10 10"><path d="M0 4h4V0h2v4h4v2H6v4H4V6H0z" fill="#666" /></svg></PlainButton>
        <ZoomValue>100%</ZoomValue>
      </StatusBar>
      <TaskBar><TaskItem /></TaskBar>
    </Window>
  );
}
